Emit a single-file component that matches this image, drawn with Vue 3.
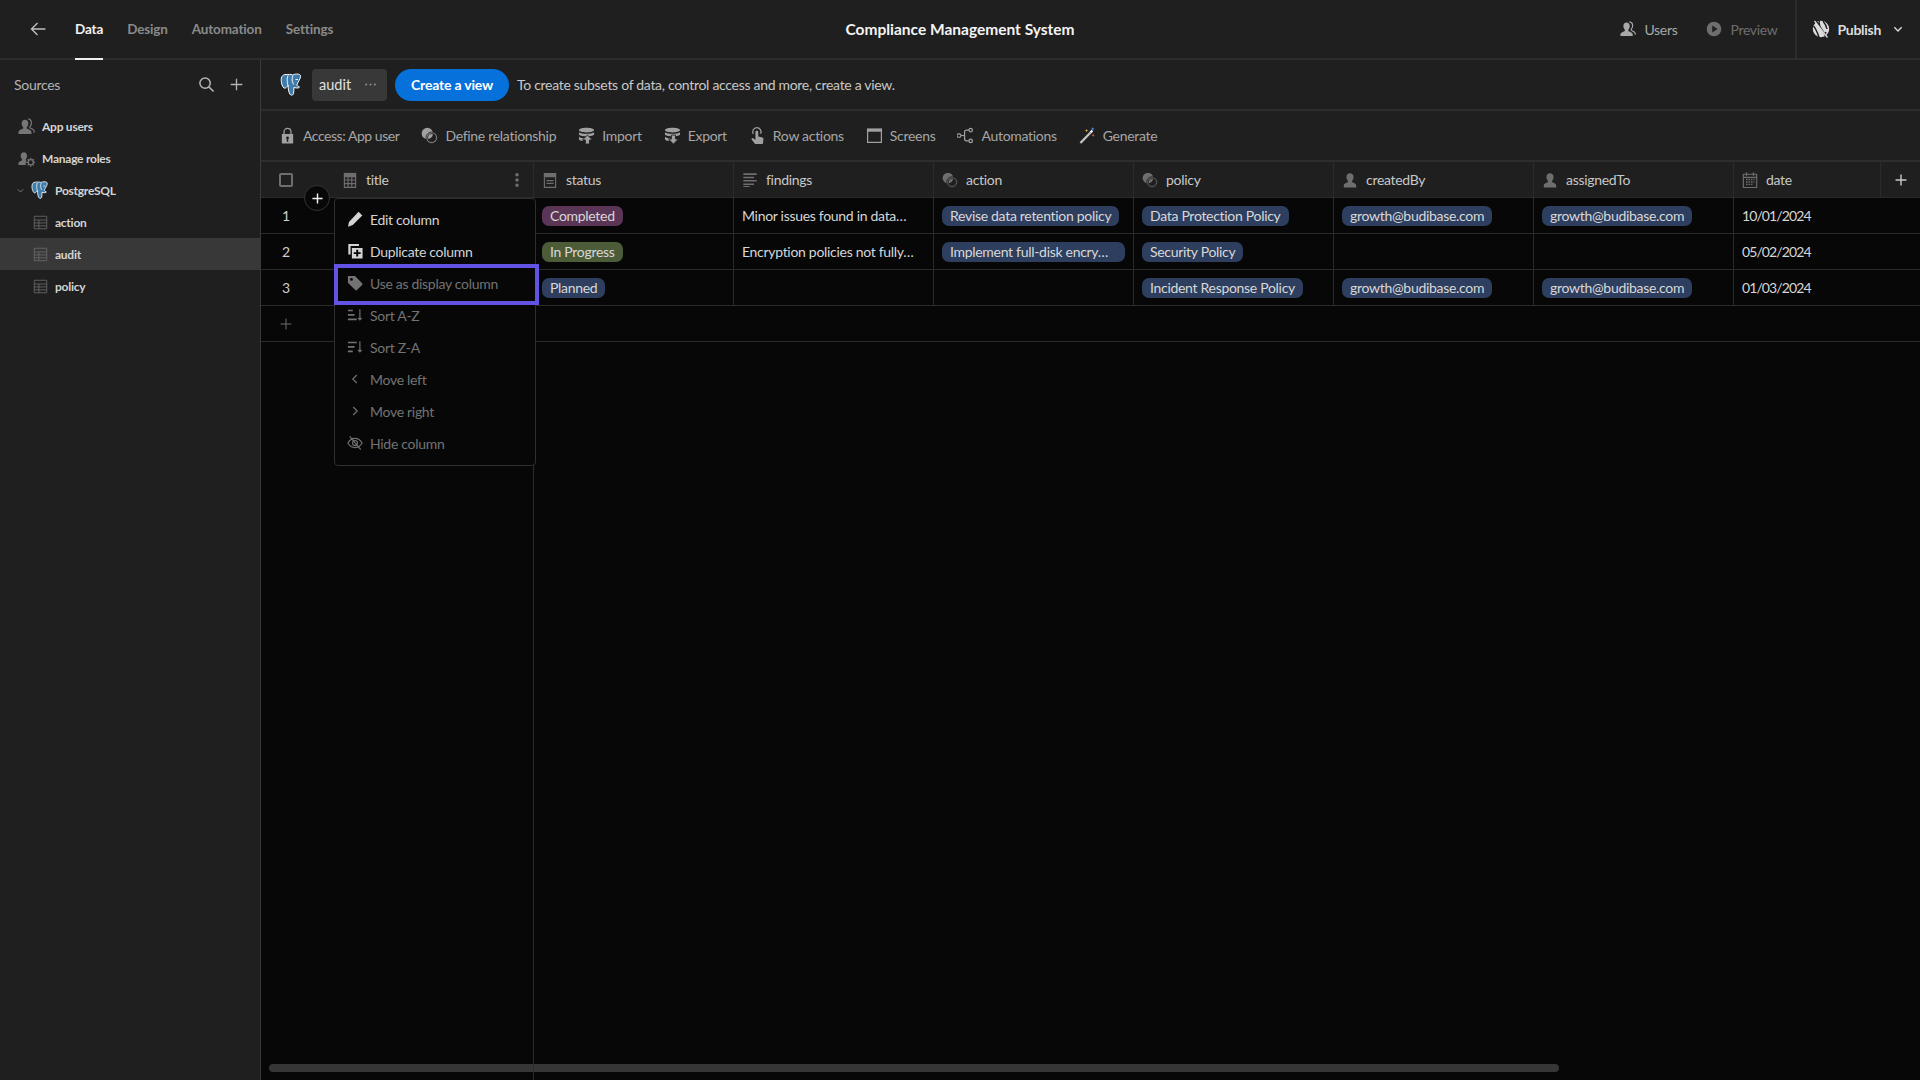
<script setup>
import { h } from 'vue'

// spectrum-ish icons on an 18x18 box: f = filled part, cut = knocked out, s = stroked part, over = filled on top
const icons = {
  back: { s: 'M16.5 9H2.5M8.5 3L2.5 9l6 6' },
  plus: { s: 'M9 2v14M2 9h14' },
  search: { s: 'M7.5 2a5.5 5.5 0 1 0 0 11a5.5 5.5 0 1 0 0-11zM11.5 11.5L16.5 16.5' },
  chevDown: { s: 'M3.5 6.5L9 12l5.500-5.500' },
  chevLeft: { s: 'M11 4.500L6.500 9l4.500 4.500' },
  chevRight: { s: 'M7 4.500L11.500 9 7 13.500' },
  users: {
    f: 'M.5 17v-2.300c0-1.400 2.800-2.500 4.500-3.300.8-.4.7-1.200 0-2.100C4.200 8.300 3.800 7 3.800 5.800 3.800 3.400 5.300 1.800 7.400 1.800s3.600 1.600 3.600 4c0 1.200-.4 2.500-1.200 3.500-.7.9-.8 1.700 0 2.100 1.700.8 4.500 1.900 4.500 3.300V17z',
    s: 'M10.500 1c2.100.2 3.700 1.900 3.700 4.300 0 1.200-.4 2.400-1.200 3.400-.6.8-.6 1.600.1 2 1.500.7 4 1.700 4 3V15.500'
  },
  person: {
    f: 'M2 17.500v-2.600c0-1.500 2.600-2.500 4.300-3.300.8-.4.7-1.100 0-2C5.400 8.500 5 7.200 5 5.800 5 3.300 6.600 1.500 9 1.500s4 1.800 4 4.300c0 1.400-.4 2.700-1.300 3.800-.7.900-.8 1.600 0 2 1.700.8 4.300 1.800 4.300 3.300v2.600z'
  },
  roles: {
    f: 'M.5 16v-2c0-1.200 2.200-2.200 3.500-2.800.7-.3.6-.9 0-1.700C3.200 8.600 2.800 7.500 2.800 6.400 2.800 4 4.200 2.500 6.200 2.500s3.400 1.500 3.400 3.900c0 1.100-.4 2.200-1.100 3.100-.6.8-.7 1.400 0 1.700l.6.3c-.8.9-1.100 2.300-.9 3.700l.1.800z',
    s: 'M13.500 10.300a2.700 2.700 0 1 0 0 5.400a2.700 2.700 0 1 0 0-5.400zM13.500 8.300v2M13.500 15.700v2M8.800 13h2M16.200 13h2M10.200 9.700l1.400 1.400M15.400 14.900l1.400 1.400M16.800 9.700l-1.400 1.400M11.600 14.900l-1.400 1.400'
  },
  table: { s: 'M1.500 1.500h15v15h-15zM1.500 6h15M1.500 9.500h15M1.500 13h15M7 6v10.500' },
  calc: {
    f: 'M2 1h14v5H2z',
    s: 'M2.700 5v12.300h12.600V5M2.700 9h12.600M2.700 13h12.600M6.800 6v11M11 6v11'
  },
  options: {
    f: 'M2 1h14v5H2zM5 9h8v1.500H5zM5 12h8v1.500H5z',
    s: 'M2.700 6v11.300h12.600V6'
  },
  lines: { f: 'M1.500 1.500h15v1.800h-15zM1.500 5.300h12v1.800h-12zM1.500 9h15v1.800h-15zM1.500 12.800h12v1.800h-12zM1.500 15.800h7v1.200h-7z' },
  link: {
    f: 'M6.700.8a6 6 0 1 0 0 12a6 6 0 1 0 0-12z',
    over: 'M11.300 5.300a6 6 0 1 0 0 12a6 6 0 1 0 0-12zM11.300 7a4.300 4.300 0 1 1 0 8.600a4.300 4.300 0 1 1 0-8.600z'
  },
  lock: {
    f: 'M3 7.500h12v10H3zM9 10a1.500 1.500 0 0 0-.8 2.800V15.500h1.600v-2.700A1.500 1.500 0 0 0 9 10z',
    s: 'M5.300 8V5.200a3.700 3.700 0 0 1 7.400 0V8'
  },
  dbUp: {
    f: 'M1 3.300C1 1.800 4.600.8 9 .8s8 1 8 2.500-3.600 2.500-8 2.500-8-1-8-2.500zM1 5.600c1.500 1.200 4.700 1.600 8 1.600s6.500-.4 8-1.600v2.700c-1.500 1.200-4.700 1.600-8 1.600s-6.500-.4-8-1.600zM1 10.300c1.500 1.200 4 1.500 6 1.600l-2 3c-2-.3-3.300-.9-4-1.700z',
    over: 'M10 8.500l5.300 5.200h-3.100V18H7.800v-4.300H4.700z'
  },
  dbDown: {
    f: 'M1 3.300C1 1.800 4.600.8 9 .8s8 1 8 2.500-3.600 2.500-8 2.500-8-1-8-2.500zM1 5.600c1.500 1.200 4.700 1.600 8 1.600s6.500-.4 8-1.600v2.700c-1.500 1.200-4.700 1.600-8 1.600s-6.500-.4-8-1.600zM1 10.300c1.500 1.200 4 1.500 6 1.600l-2 3c-2-.3-3.300-.9-4-1.700z',
    over: 'M7.800 8.500h4.400v4.300h3.100L10 18l-5.300-5.200h3.100z'
  },
  touch: {
    f: 'M6.800 5c0-1.400 3-1.400 3 0v5l3.500.8c1.400.3 2.200 1.200 2 2.500l-.7 4.700H6.400L2.800 13.200c-.6-.9.500-2 1.400-1.400L6.800 13.500z',
    s: 'M4.500 7.300a4.400 4.400 0 1 1 7.800-.2'
  },
  screen: {
    f: 'M1 1.500h16v3.500H1z',
    s: 'M1.700 3v13.300h14.600V3'
  },
  flow: {
    s: 'M3.800 9H8M8 9V5.500C8 4 8.800 3.300 10 3.300h2.700M8 9v3.500c0 1.500.8 2.200 2 2.200h2.700M2 7.300a1.800 1.800 0 1 0 0 3.500a1.800 1.800 0 1 0 0-3.500zM14.500 1.500a1.800 1.800 0 1 0 0 3.600a1.800 1.800 0 1 0 0-3.600zM14.500 12.900a1.800 1.800 0 1 0 0 3.600a1.800 1.800 0 1 0 0-3.600z'
  },
  calendar: {
    f: 'M4.300 .5h1.600v3.700H4.300zM12.100 .5h1.600v3.700h-1.600zM4.500 7.500h1.700v1.700H4.500zM7.300 7.500H9v1.700H7.300zM10.100 7.500h1.700v1.700h-1.700zM12.900 7.500h1.100v1.700h-1.100zM4.500 10.300h1.700V12H4.500zM7.300 10.300H9V12H7.300zM10.100 10.300h1.700V12h-1.700zM12.900 10.300h1.100V12h-1.100zM4.500 13.100h1.700v1.600H4.500zM7.300 13.100H9v1.600H7.300zM10.100 13.100h1.700v1.600h-1.700z',
    s: 'M1.500 2.500h15v15h-15zM1.500 6h15'
  },
  pencil: { f: 'M13 .8l4.200 4.200L6.500 15.700l-5.300 2 1-5.300z' },
  duplicate: {
    f: 'M1.500 1h12v2.500H4v9.500H1.500zM5.500 5.500H17.500V17.500H5.500zM10.400 7.700v2.800H7.600v1.800h2.800v2.800h2.200v-2.800h2.800v-1.800h-2.800V7.700z'
  },
  tag: {
    f: 'M1 1h8l8 8.300c.6.600.6 1.300 0 1.900L11.200 17c-.6.600-1.300.6-1.900 0L1 8.800zM5 3.400a1.600 1.600 0 1 0 0 3.200a1.600 1.600 0 1 0 0-3.200z'
  },
  sortAz: {
    f: 'M1 3h5.500v1.900H1zM1 8h7.500v1.900H1zM1 13h10v1.900H1z',
    s: 'M14.500 2.500v12M12.500 12.300l2 2.300 2-2.300'
  },
  sortZa: {
    f: 'M1 3h10v1.900H1zM1 8h7.500v1.900H1zM1 13h5.500v1.900H1z',
    s: 'M14.500 2.500v12M12.500 12.300l2 2.300 2-2.300'
  },
  hide: {
    s: 'M1 9c2.200-3.700 4.800-5.200 8-5.200s5.800 1.500 8 5.200c-2.200 3.700-4.800 5.200-8 5.200S3.200 12.700 1 9zM9 6.200a2.800 2.800 0 1 0 0 5.600a2.800 2.800 0 1 0 0-5.600zM3 1.500l12.500 15'
  },
  play: {
    f: 'M9 .8a8.200 8.200 0 1 0 0 16.400a8.200 8.200 0 1 0 0-16.400zM7 5l6 4-6 4z'
  },
  globeOff: {
    f: 'M9 .8a8.200 8.200 0 1 0 0 16.400a8.200 8.200 0 1 0 0-16.400z',
    cut: 'M3.500 0l12 18M7.500 1c-1 2 0 5 2 8M1.500 6c2 2 4 7 5.500 11M11 1c2 2.500 3.500 5 4 8M14 12l-1.500 3.500',
    s: 'M2.500 1l13 16.500'
  },
  dots: { f: 'M9 1.200a2 2 0 1 0 0 4a2 2 0 1 0 0-4zM9 7a2 2 0 1 0 0 4a2 2 0 1 0 0-4zM9 12.800a2 2 0 1 0 0 4a2 2 0 1 0 0-4z' },
  more: { f: 'M3 7.500a1.500 1.500 0 1 0 0 3a1.500 1.500 0 1 0 0-3zM9 7.500a1.500 1.500 0 1 0 0 3a1.500 1.500 0 1 0 0-3zM15 7.500a1.500 1.500 0 1 0 0 3a1.500 1.500 0 1 0 0-3z' }
}

const Icon = (props) => {
  const ic = icons[props.name]
  const kids = []
  if (ic.f) kids.push(h('path', { d: ic.f, fill: 'currentColor', 'fill-rule': 'evenodd' }))
  if (ic.cut) kids.push(h('path', { d: ic.cut, fill: 'none', stroke: '#1f1f1f', 'stroke-width': 1.4 }))
  if (ic.s) kids.push(h('path', { d: ic.s, fill: 'none', stroke: 'currentColor', 'stroke-width': props.weight || 1.3 }))
  if (ic.over) kids.push(h('path', { d: ic.over, fill: 'currentColor', 'fill-rule': 'evenodd', stroke: '#1f1f1f', 'stroke-width': 0.9 }))
  return h('svg', { viewBox: '0 0 18 18', width: props.size || 16, height: props.size || 16 }, kids)
}
Icon.props = ['name', 'size', 'weight']

const tabs = [
  { label: 'Data', active: true },
  { label: 'Design' },
  { label: 'Automation' },
  { label: 'Settings' }
]

const tables = ['action', 'audit', 'policy']

const tools = [
  { icon: 'lock', label: 'Access: App user' },
  { icon: 'link', label: 'Define relationship' },
  { icon: 'dbUp', label: 'Import' },
  { icon: 'dbDown', label: 'Export' },
  { icon: 'touch', label: 'Row actions' },
  { icon: 'screen', label: 'Screens' },
  { icon: 'flow', label: 'Automations' }
]

const columns = [
  { icon: 'options', label: 'status' },
  { icon: 'lines', label: 'findings' },
  { icon: 'link', label: 'action' },
  { icon: 'link', label: 'policy' },
  { icon: 'person', label: 'createdBy' },
  { icon: 'person', label: 'assignedTo' },
  { icon: 'calendar', label: 'date' }
]

const email = 'growth@budibase.com'
const rows = [
  {
    id: 1,
    status: { text: 'Completed', tone: 'plum' },
    findings: 'Minor issues found in data…',
    action: 'Revise data retention policy',
    policy: 'Data Protection Policy',
    createdBy: email,
    assignedTo: email,
    date: '10/01/2024'
  },
  {
    id: 2,
    status: { text: 'In Progress', tone: 'olive' },
    findings: 'Encryption policies not fully…',
    action: 'Implement full-disk encry…',
    policy: 'Security Policy',
    createdBy: '',
    assignedTo: '',
    date: '05/02/2024'
  },
  {
    id: 3,
    status: { text: 'Planned', tone: 'navy' },
    findings: '',
    action: '',
    policy: 'Incident Response Policy',
    createdBy: email,
    assignedTo: email,
    date: '01/03/2024'
  }
]

const menu = [
  { icon: 'pencil', label: 'Edit column' },
  { icon: 'duplicate', label: 'Duplicate column' },
  { icon: 'tag', label: 'Use as display column', off: true },
  { icon: 'sortAz', label: 'Sort A-Z', off: true },
  { icon: 'sortZa', label: 'Sort Z-A', off: true },
  { icon: 'chevLeft', label: 'Move left', off: true },
  { icon: 'chevRight', label: 'Move right', off: true },
  { icon: 'hide', label: 'Hide column', off: true }
]
</script>

<template>
  <div class="app">
    <header class="nav">
      <div class="nav-left">
        <span class="back"><Icon name="back" :size="18" :weight="1.4" /></span>
        <a v-for="t in tabs" :key="t.label" class="tab" :class="{ active: t.active }">{{ t.label }}</a>
      </div>
      <div class="app-title">Compliance Management System</div>
      <div class="nav-right">
        <span class="nav-btn"><Icon name="users" />Users</span>
        <span class="nav-btn dim"><Icon name="play" />Preview</span>
        <div class="publish">
          <Icon name="globeOff" :size="18" />
          <span>Publish</span>
          <span class="pub-caret"><Icon name="chevDown" :size="12" :weight="2" /></span>
        </div>
      </div>
    </header>

    <div class="main">
      <aside class="side">
        <div class="side-head">
          <span>Sources</span>
          <div class="side-actions">
            <Icon name="search" :size="17" :weight="1.6" />
            <Icon name="plus" :size="15" :weight="1.6" />
          </div>
        </div>
        <div class="side-item"><span class="si-icon"><Icon name="users" :size="17" /></span>App users</div>
        <div class="side-item"><span class="si-icon"><Icon name="roles" :size="17" /></span>Manage roles</div>
        <div class="side-item source">
          <span class="caret"><Icon name="chevDown" :size="9" :weight="1.8" /></span>
          <svg class="pg" viewBox="0 0 24 24" width="19" height="20">
            <path d="M6 2C2.500 2 1 4.500 1.200 8c.2 3 1.200 6.500 2.800 7.500 1 .6 2-.2 2.800-1.200L8 13c.2 3 .6 6.500 1.800 8.500.9 1.500 3 1.700 3.700-.3.5-1.600.2-4.200.4-6.200 1.500.3 3.500.8 5 .2 1-.5.500-1.200-.6-1.500-1.400-.3-1.600-1-1.100-2.200.9-2 3-4.800 3.400-7.500C21 1.500 17 1.200 14.500 1.800c-.8.2-1.300.4-1.800.7C10.500 1.500 8.500 2 6 2z" fill="#3f7cab" stroke="#fff" stroke-width="1" />
            <path d="M8 3c-1.500 4-.7 8 .3 11M13 3c-1.500 3-1 6 .6 9M18 7h-2.500" fill="none" stroke="#fff" stroke-width=".9" />
          </svg>
          PostgreSQL
        </div>
        <div v-for="t in tables" :key="t" class="side-item nested" :class="{ selected: t === 'audit' }">
          <span class="tb-icon"><Icon name="table" :size="15" :weight="1" /></span>{{ t }}
        </div>
      </aside>

      <section class="content">
        <div class="view-bar">
          <svg class="pg" viewBox="0 0 24 24" width="24" height="25">
            <path d="M6 2C2.500 2 1 4.500 1.200 8c.2 3 1.200 6.500 2.800 7.500 1 .6 2-.2 2.800-1.200L8 13c.2 3 .6 6.500 1.800 8.500.9 1.500 3 1.700 3.700-.3.5-1.600.2-4.200.4-6.200 1.500.3 3.500.8 5 .2 1-.5.500-1.200-.6-1.500-1.400-.3-1.600-1-1.100-2.200.9-2 3-4.800 3.400-7.500C21 1.500 17 1.200 14.500 1.800c-.8.2-1.300.4-1.800.7C10.500 1.500 8.500 2 6 2z" fill="#3f7cab" stroke="#fff" stroke-width="1" />
            <path d="M8 3c-1.500 4-.7 8 .3 11M13 3c-1.500 3-1 6 .6 9M18 7h-2.500" fill="none" stroke="#fff" stroke-width=".9" />
          </svg>
          <div class="table-chip">
            <span>audit</span>
            <span class="chip-more"><Icon name="more" :size="13" /></span>
          </div>
          <button class="create-btn">Create a view</button>
          <span class="view-hint">To create subsets of data, control access and more, create a view.</span>
        </div>

        <div class="toolbar">
          <span v-for="t in tools" :key="t.label" class="tool"><Icon :name="t.icon" :size="17" />{{ t.label }}</span>
          <span class="tool">
            <svg viewBox="0 0 18 18" width="17" height="17">
              <path d="M1.500 17L12 6" stroke="#c4c4c4" stroke-width="2.400" fill="none" />
              <path d="M12 6l2.200-2.200" stroke="#eee" stroke-width="2.400" fill="none" />
              <path d="M14.500 0l.6 1.500 1.500.6-1.500.6-.6 1.500-.6-1.500-1.500-.6 1.500-.6z" fill="#5b8fe8" />
              <path d="M8 2l.5 1.300 1.300.5-1.300.5L8 5.600l-.5-1.300-1.300-.5 1.300-.5z" fill="#e8b04a" />
              <path d="M15 7l.5 1.300 1.300.5-1.300.5-.5 1.300-.5-1.300-1.300-.5 1.300-.5z" fill="#e0544a" />
            </svg>
            Generate
          </span>
        </div>

        <div class="grid">
          <div class="row head">
            <div class="cell sticky">
              <div class="gutter"><span class="checkbox"></span></div>
              <div class="title-col">
                <span class="h-icon"><Icon name="calc" /></span>
                <span class="h-label">title</span>
                <span class="h-menu"><Icon name="dots" /></span>
              </div>
            </div>
            <div v-for="c in columns" :key="c.label" class="cell">
              <span class="h-icon"><Icon :name="c.icon" /></span>
              <span class="h-label">{{ c.label }}</span>
            </div>
            <div class="cell add-col"><Icon name="plus" :size="14" :weight="1.8" /></div>
          </div>

          <div v-for="r in rows" :key="r.id" class="row">
            <div class="cell sticky"><div class="gutter num">{{ r.id }}</div></div>
            <div class="cell"><span class="pill" :class="r.status.tone">{{ r.status.text }}</span></div>
            <div class="cell text">{{ r.findings }}</div>
            <div class="cell"><span v-if="r.action" class="pill navy" :class="{ clipped: r.action.endsWith('…') }">{{ r.action }}</span></div>
            <div class="cell"><span v-if="r.policy" class="pill navy">{{ r.policy }}</span></div>
            <div class="cell"><span v-if="r.createdBy" class="pill navy">{{ r.createdBy }}</span></div>
            <div class="cell"><span v-if="r.assignedTo" class="pill navy">{{ r.assignedTo }}</span></div>
            <div class="cell text date">{{ r.date }}</div>
            <div class="cell plain"></div>
          </div>

          <div class="add-row">
            <div class="gutter add-btn"><Icon name="plus" :size="14" :weight="1.3" /></div>
          </div>

          <div class="filler"><div class="filler-line"></div></div>

          <span class="insert"><Icon name="plus" :size="13" :weight="2" /></span>

          <ul class="col-menu">
            <li v-for="m in menu" :key="m.label" :class="{ off: m.off }">
              <span class="m-icon"><Icon :name="m.icon" :size="16" /></span>{{ m.label }}
            </li>
          </ul>
          <div class="callout"></div>

          <div class="scrollbar"></div>
        </div>
      </section>
    </div>
  </div>
</template>

<style>
html, body {
  margin: 0;
  background: #1f1f1f;
}
</style>

<style scoped>
.app {
  width: 1920px;
  height: 1080px;
  display: flex;
  flex-direction: column;
  overflow: hidden;
  background: #1f1f1f;
  color: #d8d8d8;
  font-family: Lato, "Open Sans", sans-serif;
  font-size: 14px;
  letter-spacing: -0.3px;
}

svg {
  display: block;
  flex: none;
}

.nav {
  height: 60px;
  box-sizing: border-box;
  border-bottom: 2px solid #2d2d2d;
  display: grid;
  grid-template-columns: 1fr auto 1fr;
  align-items: stretch;
  flex: none;
}
.nav-left {
  display: flex;
  align-items: center;
  gap: 24px;
  padding-left: 29px;
}
.back {
  color: #bdbdbd;
  margin-right: 4px;
}
.tab {
  color: #8a8a8a;
  font-weight: 700;
  font-size: 13.5px;
  letter-spacing: -0.15px;
  height: 100%;
  display: flex;
  align-items: center;
  position: relative;
}
.tab.active {
  color: #f2f2f2;
}
.tab.active::after {
  content: "";
  position: absolute;
  left: 0;
  right: 0;
  bottom: -2px;
  height: 2px;
  background: #f0f0f0;
}
.app-title {
  align-self: center;
  color: #f4f4f4;
  font-weight: 700;
  font-size: 15.5px;
  letter-spacing: 0;
}
.nav-right {
  display: flex;
  justify-content: flex-end;
  align-items: center;
}
.nav-btn {
  display: flex;
  align-items: center;
  gap: 8px;
  margin-right: 29px;
  color: #a8a8a8;
}
.nav-btn.dim {
  color: #6e6e6e;
  margin-right: 17px;
}
.publish {
  height: 100%;
  display: flex;
  align-items: center;
  gap: 8px;
  border-left: 2px solid #2d2d2d;
  padding: 0 16px 0 15px;
  color: #dcdcdc;
  font-weight: 700;
}
.pub-caret {
  margin-left: 3px;
}

.main {
  flex: 1;
  display: flex;
  min-height: 0;
}

.side {
  width: 261px;
  box-sizing: border-box;
  border-right: 1px solid #3a3a3a;
  flex: none;
}
.side-head {
  height: 48px;
  margin-bottom: 2px;
  display: flex;
  align-items: center;
  justify-content: space-between;
  padding: 0 16px 0 14px;
  color: #b4b4b4;
}
.side-actions {
  display: flex;
  align-items: center;
  gap: 14px;
  color: #b4b4b4;
}
.side-item {
  height: 32px;
  display: flex;
  align-items: center;
  font-size: 12px;
  font-weight: 700;
  letter-spacing: -0.25px;
  color: #d4d4d4;
  padding-left: 18px;
}
.si-icon {
  color: #767676;
  width: 24px;
}
.source {
  padding-left: 16px;
}
.caret {
  color: #808080;
  width: 15px;
}
.source .pg {
  margin-right: 5px;
}
.nested {
  padding-left: 33px;
}
.tb-icon {
  color: #6a6a6a;
  width: 22px;
}
.selected {
  background: #383838;
}

.content {
  flex: 1;
  min-width: 0;
  display: flex;
  flex-direction: column;
}
.view-bar {
  height: 51px;
  box-sizing: border-box;
  border-bottom: 2px solid #2d2d2d;
  display: flex;
  align-items: center;
  padding-left: 19px;
  flex: none;
}
.table-chip {
  margin-left: 8px;
  width: 75px;
  height: 32px;
  box-sizing: border-box;
  background: #383838;
  border-radius: 4px;
  display: flex;
  align-items: center;
  justify-content: space-between;
  padding: 0 10px 0 7px;
  color: #e0e0e0;
  font-size: 14.5px;
  letter-spacing: 0;
}
.chip-more {
  color: #8a8a8a;
}
.create-btn {
  margin-left: 8px;
  width: 114px;
  height: 32px;
  border: 0;
  border-radius: 16px;
  background: #0670db;
  color: #fff;
  font-family: inherit;
  font-size: 14px;
  font-weight: 700;
  letter-spacing: -0.2px;
  padding: 0;
}
.view-hint {
  margin-left: 8px;
  color: #c8c8c8;
}

.toolbar {
  height: 51px;
  box-sizing: border-box;
  border-bottom: 2px solid #2d2d2d;
  display: flex;
  align-items: center;
  gap: 22px;
  padding-left: 18px;
  flex: none;
}
.tool {
  display: flex;
  align-items: center;
  gap: 7px;
  color: #a6a6a6;
  white-space: nowrap;
}
.tool:first-child {
  letter-spacing: -0.45px;
}
.tool svg {
  color: #a0a0a0;
}

.grid {
  flex: 1;
  min-height: 0;
  position: relative;
  background: #070707;
  display: flex;
  flex-direction: column;
}
.row {
  display: grid;
  grid-template-columns: 273px repeat(6, 200px) 147px 39px;
  height: 36px;
  flex: none;
}
.cell {
  box-sizing: border-box;
  border-right: 1px solid #2b2b2b;
  border-bottom: 1px solid #2b2b2b;
  display: flex;
  align-items: center;
  padding-left: 8px;
  min-width: 0;
  white-space: nowrap;
  overflow: hidden;
}
.cell.text {
  color: #d6d6d6;
}
.cell.date {
  border-right: 0;
  letter-spacing: -0.9px;
}
.cell.plain {
  border-right: 0;
}
.head {
  background: #1f1f1f;
}
.head .cell {
  color: #c8c8c8;
}
.cell.sticky {
  padding-left: 0;
}
.gutter {
  width: 50px;
  display: flex;
  align-items: center;
  justify-content: center;
  flex: none;
}
.num {
  color: #cfcfcf;
}
.checkbox {
  width: 14px;
  height: 14px;
  box-sizing: border-box;
  border: 2px solid #6e6e6e;
  border-radius: 2px;
}
.title-col {
  margin-left: 31px;
  width: 183px;
  display: flex;
  align-items: center;
  flex: none;
}
.h-icon {
  color: #6e6e6e;
  width: 24px;
  flex: none;
}
.h-menu {
  color: #6e6e6e;
  margin-left: auto;
}
.add-col {
  color: #c8c8c8;
  justify-content: center;
  padding-left: 0;
}
.head .add-col {
  border-right: 0;
}

.pill {
  display: block;
  box-sizing: border-box;
  height: 20px;
  line-height: 20px;
  padding: 0 8px;
  border-radius: 7px;
  color: #d8d8d8;
}
.pill.clipped {
  min-width: 183px;
}
.plum {
  background: #5a3556;
}
.olive {
  background: #4c5c39;
}
.navy {
  background: #2e3e5e;
}

.add-row {
  height: 36px;
  box-sizing: border-box;
  border-bottom: 1px solid #2b2b2b;
  flex: none;
  display: flex;
  align-items: center;
}
.add-btn {
  color: #6e6e6e;
}
.filler {
  flex: 1;
  min-height: 0;
}
.filler-line {
  position: relative;
  z-index: 1;
  width: 273px;
  height: 100%;
  box-sizing: border-box;
  border-right: 1px solid #2b2b2b;
}

.insert {
  position: absolute;
  left: 43px;
  top: 23px;
  z-index: 3;
  width: 26px;
  height: 26px;
  box-sizing: border-box;
  border-radius: 50%;
  border: 1px solid #333;
  background: #080808;
  color: #f0f0f0;
  display: flex;
  align-items: center;
  justify-content: center;
}
.col-menu {
  position: absolute;
  left: 73px;
  top: 36px;
  z-index: 2;
  width: 202px;
  box-sizing: border-box;
  margin: 0;
  padding: 4px 0 6px;
  list-style: none;
  background: #070707;
  border: 1px solid #2f2f2f;
  border-radius: 4px;
}
.col-menu li {
  height: 32px;
  display: flex;
  align-items: center;
  padding-left: 12px;
  color: #d4d4d4;
}
.col-menu li.off {
  color: #737373;
}
.m-icon {
  width: 23px;
  flex: none;
}
.callout {
  position: absolute;
  left: 73px;
  top: 102px;
  z-index: 4;
  width: 205px;
  height: 41px;
  box-sizing: border-box;
  border: 4px solid #6353e4;
}
.scrollbar {
  position: absolute;
  left: 8px;
  bottom: 8px;
  width: 1290px;
  height: 8px;
  border-radius: 4px;
  background: #363636;
}
</style>
